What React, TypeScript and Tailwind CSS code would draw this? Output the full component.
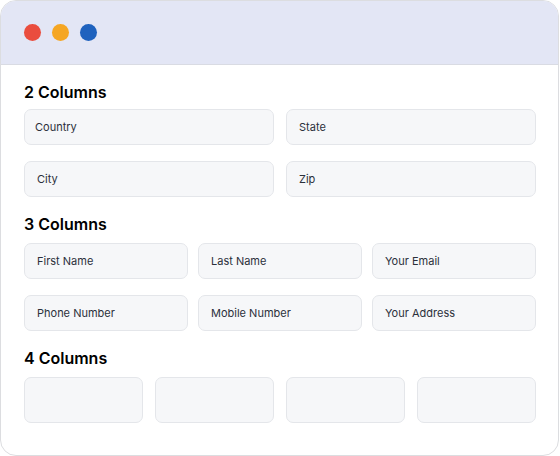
import React from "react";

const font = { fontFamily: "Inter, 'Liberation Sans', sans-serif" };

function Field({ label, pad = "pl-3", tall = false }: { label?: string; pad?: string; tall?: boolean }) {
    return (
        <div
            className={`flex items-center rounded-[7px] border border-[#e4e6ea] bg-[#f6f7f9] text-[11px] text-[#2b303b] ${pad} ${tall ? "h-[46px]" : "h-[36px]"}`}
        >
            {label}
        </div>
    );
}

export default function App() {
    return (
        <div className="bg-white w-[560px] h-[456px]" style={font}>
            <div className="w-[559px] h-[456px] rounded-[16px] border border-[#dcdde0] overflow-hidden bg-white">
                {/* window header */}
                <div className="h-[64px] bg-[#e3e6f5] border-b border-[#d9dbe3] flex items-center gap-[11px] pl-[23px]">
                    <span className="w-[17px] h-[17px] rounded-full bg-[#ea4d3e]" />
                    <span className="w-[17px] h-[17px] rounded-full bg-[#f5a623]" />
                    <span className="w-[17px] h-[17px] rounded-full bg-[#1f62be]" />
                </div>

                <div className="pl-[23px] pr-[22px] pt-[15px]">
                    <h2 className="text-[16px] leading-[24px] font-semibold text-black">2 Columns</h2>
                    <div className="grid grid-cols-2 gap-x-3 gap-y-[16px] mt-[5px]">
                        <Field label="Country" pad="pl-[10px]" />
                        <Field label="State" />
                        <Field label="City" />
                        <Field label="Zip" />
                    </div>

                    <h2 className="text-[16px] leading-[24px] font-semibold text-black mt-[15px]">3 Columns</h2>
                    <div className="grid grid-cols-3 gap-x-[10px] gap-y-[16px] mt-[7px]">
                        <Field label="First Name" />
                        <Field label="Last Name" />
                        <Field label="Your Email" />
                        <Field label="Phone Number" />
                        <Field label="Mobile Number" />
                        <Field label="Your Address" />
                    </div>

                    <h2 className="text-[16px] leading-[24px] font-semibold text-black mt-[15px]">4 Columns</h2>
                    <div className="grid grid-cols-4 gap-x-3 mt-[7px]">
                        <Field tall />
                        <Field tall />
                        <Field tall />
                        <Field tall />
                    </div>
                </div>
            </div>
        </div>
    );
}
